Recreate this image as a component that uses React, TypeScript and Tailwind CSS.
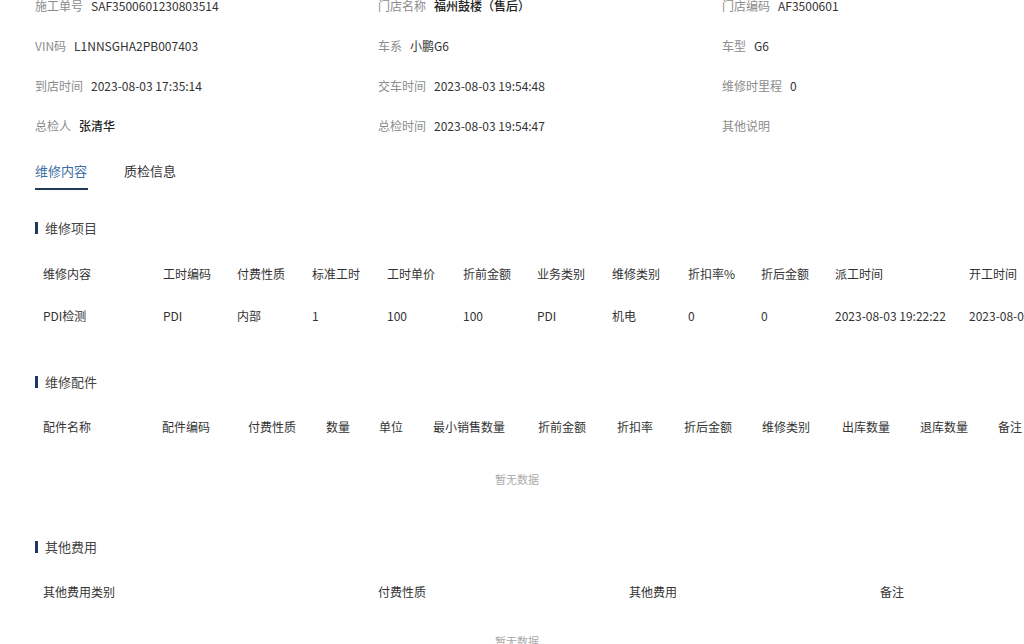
import React from "react";

const font = { fontFamily: '"Noto Sans CJK SC", "Liberation Sans", sans-serif' };

function Info({ label, value, bold }: { label: string; value: string; bold?: boolean }) {
  return (
    <div className="flex items-center gap-2 text-[12px] leading-[20px]">
      <span className="text-[#8c8c8c]">{label}</span>
      <span className={bold ? "text-[#222] font-medium" : "text-[#333]"}>{value}</span>
    </div>
  );
}

function SectionTitle({ title }: { title: string }) {
  return (
    <div className="flex items-center gap-[7px] h-[20px]">
      <span className="w-[3px] h-[12px] bg-[#1e3a5f]" />
      <span className="text-[13px] text-[#444]">{title}</span>
    </div>
  );
}

function Row({ cells, widths, className }: { cells: string[]; widths: number[]; className: string }) {
  return (
    <div className={"flex items-center " + className}>
      {cells.map((c, i) => (
        <div key={i} className="shrink-0 pl-2 whitespace-nowrap overflow-hidden" style={{ width: widths[i] }}>
          {c}
        </div>
      ))}
    </div>
  );
}

export default function App() {
  const w1 = [120, 74, 75, 75, 76, 74, 75, 76, 73, 74, 134, 120];
  const w2 = [119, 86, 78, 53, 54, 105, 79, 67, 78, 80, 78, 78, 120];
  const w3 = [335, 251, 251, 251];
  return (
    <div className="w-[1024px] h-[644px] overflow-hidden bg-white" style={font}>
      <div className="pl-[35px] -mt-[4px]">
        <div className="grid grid-cols-[343px_344px_1fr] gap-y-[20px]">
          <Info label="施工单号" value="SAF3500601230803514" />
          <Info label="门店名称" value="福州鼓楼（售后）" bold />
          <Info label="门店编码" value="AF3500601" />
          <Info label="VIN码" value="L1NNSGHA2PB007403" />
          <Info label="车系" value="小鹏G6" />
          <Info label="车型" value="G6" />
          <Info label="到店时间" value="2023-08-03 17:35:14" />
          <Info label="交车时间" value="2023-08-03 19:54:48" />
          <Info label="维修时里程" value="0" />
          <Info label="总检人" value="张清华" bold />
          <Info label="总检时间" value="2023-08-03 19:54:47" />
          <Info label="其他说明" value="" />
        </div>

        <div className="flex gap-[36px] mt-[25px] text-[13px]">
          <div className="flex flex-col items-start">
            <span className="text-[#3a6ea5] leading-[20px]">维修内容</span>
            <span className="mt-[7px] h-[2px] w-[53px] bg-[#1f3b57]" />
          </div>
          <span className="text-[#333] leading-[20px]">质检信息</span>
        </div>

        <div className="mt-[28px]">
          <SectionTitle title="维修项目" />
        </div>
        <div className="w-[1100px] text-[12px] text-[#333]">
          <Row
            className="h-[42px] mt-[15px]"
            widths={w1}
            cells={["维修内容", "工时编码", "付费性质", "标准工时", "工时单价", "折前金额", "业务类别", "维修类别", "折扣率%", "折后金额", "派工时间", "开工时间"]}
          />
          <Row
            className="h-[42px]"
            widths={w1}
            cells={["PDI检测", "PDI", "内部", "1", "100", "100", "PDI", "机电", "0", "0", "2023-08-03 19:22:22", "2023-08-03 19:22:22"]}
          />
        </div>

        <div className="mt-[35px]">
          <SectionTitle title="维修配件" />
        </div>
        <div className="w-[1100px] text-[12px] text-[#333]">
          <Row
            className="h-[42px] mt-[14px]"
            widths={w2}
            cells={["配件名称", "配件编码", "付费性质", "数量", "单位", "最小销售数量", "折前金额", "折扣率", "折后金额", "维修类别", "出库数量", "退库数量", "备注"]}
          />
        </div>
        <div className="w-[964px] h-[62px] flex items-center justify-center text-[11px] text-[#aaa]">暂无数据</div>

        <div className="mt-[27px]">
          <SectionTitle title="其他费用" />
        </div>
        <div className="w-[1100px] text-[12px] text-[#333]">
          <Row
            className="h-[42px] mt-[14px]"
            widths={w3}
            cells={["其他费用类别", "付费性质", "其他费用", "备注"]}
          />
        </div>
        <div className="w-[964px] h-[56px] flex items-center justify-center text-[11px] text-[#aaa]">暂无数据</div>
      </div>
    </div>
  );
}
